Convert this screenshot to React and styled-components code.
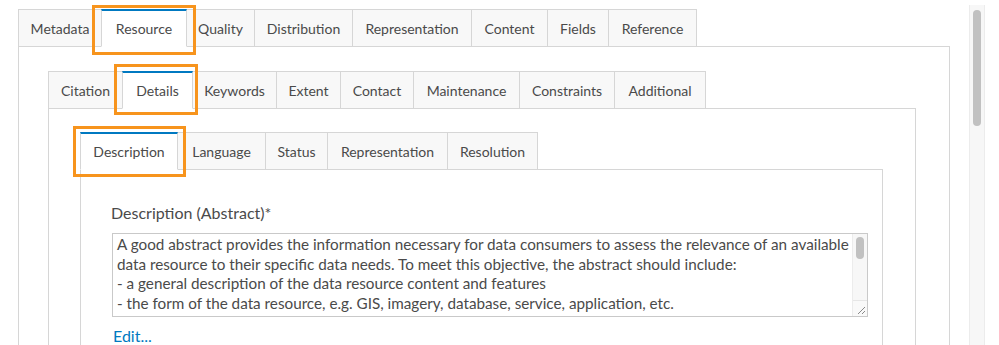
import React from 'react'
import styled, { createGlobalStyle } from 'styled-components'

const GlobalStyle = createGlobalStyle`
  html, body { margin:0; padding:0; background:#fff; overflow:hidden; }
  body { font-family: Lato, "Noto Sans", sans-serif; color:#4a4a4a; }
`;

const outerTabs = [['Metadata',83],['Resource',85],['Quality',68],['Distribution',98],['Representation',119],['Content',76],['Fields',61],['Reference',88]];
const middleTabs = [['Citation',74],['Details',70],['Keywords',84],['Extent',64],['Contact',73],['Maintenance',106],['Constraints',95],['Additional',91]];
const innerTabs = [['Description',97],['Language',88],['Status',62],['Representation',120],['Resolution',90]];

const abstractLines = [
  'A good abstract provides the information necessary for data consumers to assess the relevance of an available',
  'data resource to their specific data needs. To meet this objective, the abstract should include:',
  '- a general description of the data resource content and features',
  '- the form of the data resource, e.g. GIS, imagery, database, service, application, etc.',
];

function Tabs({ items, active, box }) {
  return (
    <TabBar>
      {items.map(([t, w]) => (
        <Tab key={t} $w={w} $active={t === active} $box={box}>{t}</Tab>
      ))}
    </TabBar>
  )
}

export default function App() {
  return (
    <Page>
      <GlobalStyle />
      <Main>
        <Tabs items={outerTabs} active="Resource" box={[-3, -7, -6, -7]} />
        <Panel $pad="24px 33px 0 29px">
          <Tabs items={middleTabs} active="Details" box={[-6, -3, -4, -6]} />
          <Panel $pad="23px 32px 0 31px">
            <Tabs items={innerTabs} active="Description" box={[-5, -6, -5, -5]} />
            <Panel $pad="33px 15px 0 30px">
              <Label>Description (Abstract)*</Label>
              <TextBox>
                <TextLines>
                  {abstractLines.map((l, i) => <div key={i}>{l}</div>)}
                </TextLines>
                <ScrollTrack>
                  <SmallThumb />
                  <Resizer>
                    <svg width="14" height="14" viewBox="0 0 14 14">
                      <path d="M12 5 L5 12 M12 9 L9 12" stroke="#8a8a8a" strokeWidth="1" fill="none" />
                    </svg>
                  </Resizer>
                </ScrollTrack>
              </TextBox>
              <EditLink>Edit...</EditLink>
            </Panel>
          </Panel>
        </Panel>
      </Main>
      <PageScroll>
        <Thumb />
      </PageScroll>
    </Page>
  )
}

const Page = styled.div`
  width:999px;
  height:345px;
  display:flex;
  overflow:hidden;
`;

const Main = styled.div`
  width:932px;
  padding:9px 0 0 18px;
`;

const TabBar = styled.div`
  display:flex;
  align-items:flex-end;
`;

const Tab = styled.div`
  position:relative;
  box-sizing:border-box;
  width:${p => p.$w + 1}px;
  height:38px;
  display:flex;
  align-items:center;
  justify-content:center;
  font-size:14px;
  color:#4a4a4a;
  white-space:nowrap;
  background:${p => p.$active ? '#fff' : '#f8f8f8'};
  border:1px solid #d6d6d6;
  border-top:${p => p.$active ? '2px solid #0079c1' : '1px solid #d6d6d6'};
  border-bottom:${p => p.$active ? '1px solid #fff' : '1px solid #d6d6d6'};
  margin-right:-1px;
  margin-bottom:-1px;
  z-index:${p => p.$active ? 2 : 1};

  ${p => p.$active && `
    &::after{
      content:'';
      position:absolute;
      top:${p.$box[0] - 3}px;
      right:${p.$box[1] - 3}px;
      bottom:${p.$box[2] - 3}px;
      left:${p.$box[3] - 3}px;
      border:3px solid #f7941d;
      pointer-events:none;
    }
  `}
`;

const Panel = styled.div`
  border:1px solid #d6d6d6;
  border-bottom:none;
  padding:${p => p.$pad};
  height:400px;
`;

const Label = styled.div`
  font-size:16px;
  color:#4a4a4a;
  line-height:20px;
  margin-bottom:10px;
`;

const TextBox = styled.div`
  box-sizing:border-box;
  width:756px;
  height:84px;
  margin-left:1px;
  border:1px solid #c9c9c9;
  display:flex;
  overflow:hidden;
`;

const TextLines = styled.div`
  flex:1;
  padding:1px 0 0 4px;
  font-size:15.25px;
  line-height:19.7px;
  color:#4a4a4a;
  white-space:nowrap;
  overflow:hidden;
`;

const ScrollTrack = styled.div`
  width:14px;
  background:#f7f7f7;
  border-left:1px solid #ececec;
  display:flex;
  flex-direction:column;
  align-items:center;
  padding-top:3px;
`;

const SmallThumb = styled.div`
  width:8px;
  height:22px;
  border-radius:4px;
  background:#c1c1c1;
`;

const Resizer = styled.div`
  margin-top:auto;
  width:14px;
  height:15px;
  border-top:1px solid #e6e6e6;
  background:#f9f9f9;
  display:flex;
  align-items:flex-end;
  justify-content:flex-end;
  svg{ display:block; }
`;

const EditLink = styled.a`
  display:inline-block;
  margin:9px 0 0 2px;
  font-size:16px;
  color:#0079c1;
  cursor:pointer;
`;

const PageScroll = styled.div`
  width:14px;
  margin:5px 0 0 19px;
  background:#f7f7f7;
  border-left:1px solid #ececec;
  border-right:1px solid #ececec;
  display:flex;
  justify-content:center;
  padding-top:5px;
`;

const Thumb = styled.div`
  width:8px;
  height:116px;
  border-radius:4px;
  background:#c1c1c1;
`;
